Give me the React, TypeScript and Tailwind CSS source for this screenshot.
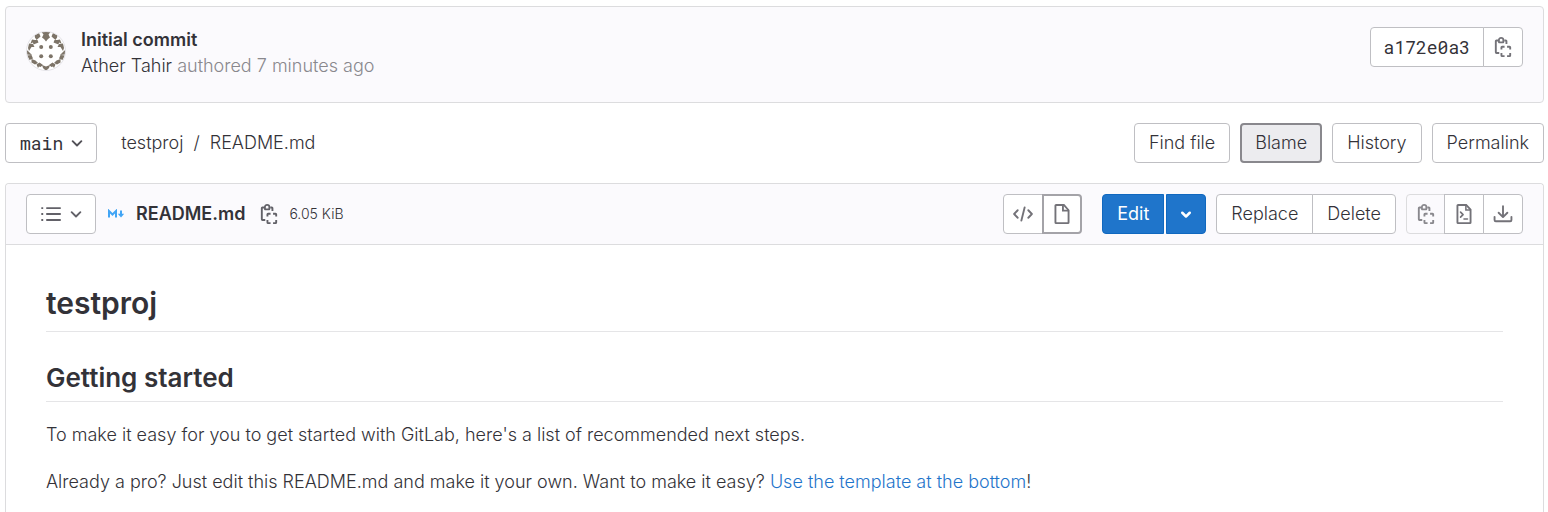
import type { ReactNode } from "react";

function Icon({ children }: { children: ReactNode }) {
  return (
    <svg
      viewBox="0 0 16 16"
      fill="none"
      stroke="currentColor"
      strokeWidth="1.5"
      aria-hidden="true"
      className="size-5 shrink-0"
    >
      {children}
    </svg>
  );
}

function ClipboardIcon() {
  return (
    <Icon>
      <path d="M4.750 2.750H2.750a.5.5 0 0 0-.5.5v9a.5.5 0 0 0 .5.5H5M9 2.750h1.250a.5.5 0 0 1 .5.5V5.500" />
      <path d="M4.750 4.250V2.250a1.750 1.500 0 0 1 3.500 0v2z" strokeLinejoin="round" strokeWidth="1.400" />
      <path d="M6.750 10V8.250a.5.5 0 0 1 .5-.5H9.250M11.250 7.750h2a.5.5 0 0 1 .5.5V10M13.750 12.750v2a.5.5 0 0 1-.5.5h-2M9.250 15.250h-2a.5.5 0 0 1-.5-.5v-2" />
    </Icon>
  );
}

function ChevronIcon({ bold = false }: { bold?: boolean }) {
  return (
    <svg viewBox="0 0 16 16" fill="none" stroke="currentColor" aria-hidden="true" className="size-5 shrink-0" strokeWidth={bold ? 2 : 1.5}>
      <path d={bold ? "M5 7l3 3 3-3" : "M4.500 6.500 8 10l3.500-3.500"} strokeLinecap="round" strokeLinejoin="round" />
    </svg>
  );
}

function ListIcon() {
  return (
    <Icon>
      <path d="M4.750 3.250h10.500M4.750 8h10.500M4.750 12.750h10.500" strokeLinecap="round" />
      <path d="M.250 3.250h1.500M.250 8h1.500M.250 12.750h1.500" />
    </Icon>
  );
}

function CodeIcon() {
  return (
    <Icon>
      <path d="M3.750 5 .900 8l2.850 3M12.250 5l2.850 3-2.850 3M9.300 2.750l-2.600 10.500" strokeLinecap="round" strokeLinejoin="round" />
    </Icon>
  );
}

function DocumentIcon() {
  return (
    <Icon>
      <path d="M2.750 1.250v13.500a.5.5 0 0 0 .5.5h9.500a.5.5 0 0 0 .5-.5V5L9.500.750H3.250a.5.5 0 0 0-.5.5z" />
      <path d="M8.750.750V5.250h4.500" />
    </Icon>
  );
}

function RawIcon() {
  return (
    <Icon>
      <path d="M2.750 1.250v13.500a.5.5 0 0 0 .5.5h9.500a.5.5 0 0 0 .5-.5V4.500L9.750.750h-6.500a.5.5 0 0 0-.5.5z" />
      <path d="M9.500.750v4h3.750" strokeWidth="1.200" />
      <path d="m5.250 6.500 2 2-2 2M8 12h2.750" strokeLinecap="round" strokeLinejoin="round" strokeWidth="1.300" />
    </Icon>
  );
}

function DownloadIcon() {
  return (
    <Icon>
      <path d="M8 1.750v8.500M4.500 7 8 10.500 11.500 7M1.250 10.250v2.500a1 1 0 0 0 1 1h11.500a1 1 0 0 0 1-1v-2.500" strokeLinecap="round" strokeLinejoin="round" />
    </Icon>
  );
}

function MarkdownIcon() {
  return (
    <svg viewBox="0 0 16 10" aria-hidden="true" className="h-[10px] w-4 shrink-0" fill="none" stroke="#42a5f5" strokeWidth="2">
      <path d="M1 8.500V2l3.500 3.500L8 2v6.500" />
      <path d="M13 1.500V6" />
      <path d="M9.800 4.800h6.400L13 8.500z" fill="#42a5f5" stroke="none" />
    </svg>
  );
}

function AvatarHalf() {
  return (
    <>
      <path d="M20 1h-4.500l2 2.500-1.500 3 2 1.500 2 2.500z" />
      <path d="M8.500 4l4.500-2 1.500 3.500-4 3.500-1.500-2.500z" />
      <path d="M6 8.500l3 .500 2.500 0 1 2.500-5 2-.5-2-2.500 1z" />
      <path d="M3 12.500l4 .5 1.500 3-3 0-2.500 4L2 17z" />
      <path d="M0 18.500l2 1.500 4 4-5-.500z" />
      <path d="M1 24.500l4.500-.500 1.500 3.500L3.500 29l-1-2z" />
      <path d="M5.500 28l4 1.500 2.500 2.500-3 1.500-3.500-2z" />
      <path d="M10.500 33.500l3-2 3.500 2.500-2.500 2-1.500-.500-1 1.500z" />
      <path d="M16 34l4 1.500V40l-3-3z" />
      <circle cx="15.200" cy="16" r="2" />
      <circle cx="15.200" cy="25.200" r="2" />
    </>
  );
}

function Avatar() {
  return (
    <svg viewBox="0 0 40 40" role="img" aria-label="Ather Tahir" className="size-10 shrink-0">
      <defs>
        <clipPath id="avatar-circle">
          <circle cx="20" cy="20" r="19.500" />
        </clipPath>
      </defs>
      <circle cx="20" cy="20" r="19.500" fill="#fff" />
      <g clipPath="url(#avatar-circle)" fill="#7d7468">
        <AvatarHalf />
        <g transform="matrix(-1 0 0 1 40 0)">
          <AvatarHalf />
        </g>
      </g>
      <circle cx="20" cy="20" r="19.500" fill="none" stroke="#e4e3e8" />
    </svg>
  );
}

const button = "flex h-10 items-center justify-center border border-[#bfbfc3] bg-white px-3.5 whitespace-nowrap";
const iconButton = "flex h-10 w-10 items-center justify-center border border-[#bfbfc3] bg-white text-[#737278]";

export default function App() {
  return (
    <main className="flex min-h-screen flex-col gap-5 pt-1.5 pr-1 pl-[5px] font-['Inter',sans-serif] text-[18px] leading-[26px] font-light text-[#333238]">
      <section className="flex items-start gap-[15px] rounded border border-[#dcdcde] bg-[#fbfafd] px-5 pt-5 pb-[23px]">
        <div className="flex pt-1">
          <Avatar />
        </div>
        <div className="grow">
          <a href="#commit" className="block w-fit font-semibold">Initial commit</a>
          <div className="text-[#89888d]">
            <a href="#author" className="text-[#333238]">Ather Tahir</a> authored <time>7 minutes ago</time>
          </div>
        </div>
        <div className="flex">
          <span className="flex h-10 items-center rounded-l border border-[#bfbfc3] bg-white px-[13px] font-['Roboto_Mono','Liberation_Mono',monospace] font-normal">a172e0a3</span>
          <button type="button" aria-label="Copy commit SHA" className={`${iconButton} -ml-px rounded-r`}>
            <ClipboardIcon />
          </button>
        </div>
      </section>

      <div className="flex items-center justify-between">
        <div className="flex items-center gap-6">
          <button type="button" className="flex h-10 items-center gap-1 rounded border border-[#bfbfc3] bg-white pr-[9px] pl-3.5 font-['Roboto_Mono','Liberation_Mono',monospace] font-normal">
            main
            <span className="text-[#535158]"><ChevronIcon /></span>
          </button>
          <nav aria-label="Breadcrumb" className="flex gap-2.5">
            <a href="#project">testproj</a>
            <span>/</span>
            <a href="#readme">README.md</a>
          </nav>
        </div>
        <div className="flex gap-2.5">
          <button type="button" className={`${button} rounded`}>Find file</button>
          <button type="button" className="flex h-10 items-center justify-center rounded border-2 border-[#89888d] bg-[#ececef] px-[13px]">Blame</button>
          <button type="button" className={`${button} rounded`}>History</button>
          <button type="button" className={`${button} rounded`}>Permalink</button>
        </div>
      </div>

      <section className="grow rounded-t border border-b-0 border-[#dcdcde]">
        <header className="flex items-center justify-between rounded-t border-b border-[#dcdcde] bg-[#fbfafd] px-5 py-2.5">
          <div className="flex items-center gap-3">
            <button type="button" aria-label="Table of contents" className="flex h-10 items-center gap-[5px] rounded border border-[#bfbfc3] bg-white pr-[9px] pl-3.5 text-[#626168]">
              <ListIcon />
              <ChevronIcon />
            </button>
            <MarkdownIcon />
            <strong className="font-semibold">README.md</strong>
            <div className="flex items-center gap-2.5">
              <button type="button" aria-label="Copy file path" className="ml-0.5 text-[#626168]">
                <ClipboardIcon />
              </button>
              <small className="text-[14px]">6.05 KiB</small>
            </div>
          </div>
          <div className="flex gap-2.5">
            <div className="mr-2.5 flex">
              <button type="button" aria-label="Display source" className={`${iconButton} rounded-l`}>
                <CodeIcon />
              </button>
              <button type="button" aria-label="Display rendered file" className="-ml-px flex h-10 w-10 items-center justify-center rounded-r border-2 border-[#a4a3a8] bg-white text-[#737278]">
                <DocumentIcon />
              </button>
            </div>
            <div className="flex gap-0.5 font-normal text-white">
              <button type="button" className="h-10 rounded-l border border-[#1068bf] bg-[#1f75cb] px-3.5">Edit</button>
              <button type="button" aria-label="More edit options" className="flex h-10 w-10 items-center justify-center rounded-r border border-[#1068bf] bg-[#1f75cb]">
                <ChevronIcon bold />
              </button>
            </div>
            <div className="flex">
              <button type="button" className={`${button} rounded-l`}>Replace</button>
              <button type="button" className={`${button} -ml-px rounded-r`}>Delete</button>
            </div>
            <div className="flex">
              <button type="button" aria-label="Copy file contents" className="flex h-10 w-[39px] items-center justify-center rounded-l border border-[#dcdcde] bg-[#fbfafd] text-[#89888d]">
                <ClipboardIcon />
              </button>
              <button type="button" aria-label="Open raw" className={`${iconButton} -ml-px`}>
                <RawIcon />
              </button>
              <button type="button" aria-label="Download" className={`${iconButton} -ml-px rounded-r`}>
                <DownloadIcon />
              </button>
            </div>
          </div>
        </header>
        <article className="px-10 pt-10">
          <h1 className="mb-[30px] border-b border-[#e5e5e7] pb-2.5 text-[30px] leading-9 font-semibold">testproj</h1>
          <h2 className="mb-5 border-b border-[#e5e5e7] pb-[7px] text-[26px] leading-8 font-semibold">Getting started</h2>
          <p className="mb-[21px]">To make it easy for you to get started with GitLab, here&apos;s a list of recommended next steps.</p>
          <p>
            Already a pro? Just edit this README.md and make it your own. Want to make it easy?{" "}
            <a href="#template" className="text-[#1f75cb]">Use the template at the bottom</a>!
          </p>
        </article>
      </section>
    </main>
  );
}
